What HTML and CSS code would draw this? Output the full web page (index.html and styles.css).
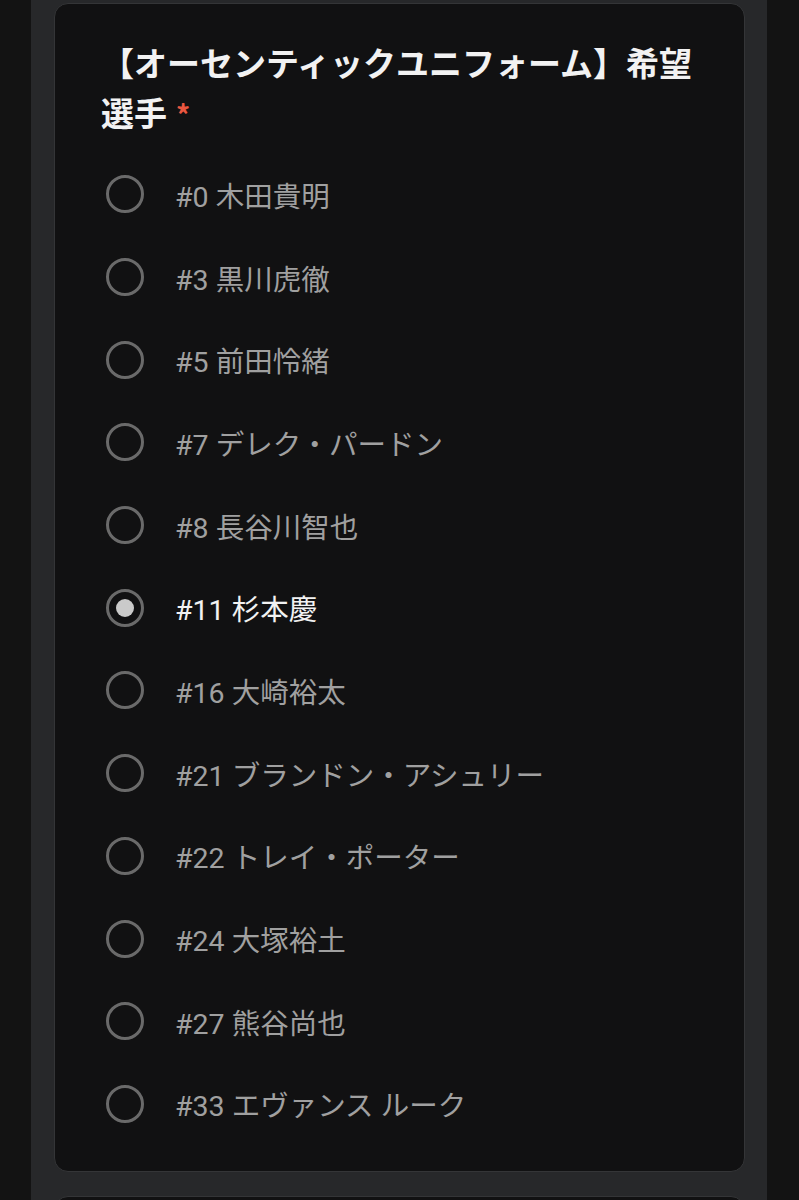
FILE: index.html
```html
<!DOCTYPE html>
<html lang="ja">
<head>
<meta charset="utf-8">
<title>オーセンティックユニフォーム</title>
<link rel="stylesheet" href="styles.css">
</head>
<body>
<div class="page">
  <div class="card">
    <div class="title">【オーセンティックユニフォーム】希望選手<span class="req">*</span></div>
    <ul class="options">
      <li class="option"><span class="radio"></span><span class="label">#0 木田貴明</span></li>
      <li class="option"><span class="radio"></span><span class="label">#3 黒川虎徹</span></li>
      <li class="option"><span class="radio"></span><span class="label">#5 前田怜緒</span></li>
      <li class="option"><span class="radio"></span><span class="label">#7 デレク・パードン</span></li>
      <li class="option"><span class="radio"></span><span class="label">#8 長谷川智也</span></li>
      <li class="option selected"><span class="radio"></span><span class="label">#11 杉本慶</span></li>
      <li class="option"><span class="radio"></span><span class="label">#16 大崎裕太</span></li>
      <li class="option"><span class="radio"></span><span class="label">#21 ブランドン・アシュリー</span></li>
      <li class="option"><span class="radio"></span><span class="label">#22 トレイ・ポーター</span></li>
      <li class="option"><span class="radio"></span><span class="label">#24 大塚裕土</span></li>
      <li class="option"><span class="radio"></span><span class="label">#27 熊谷尚也</span></li>
      <li class="option"><span class="radio"></span><span class="label">#33 エヴァンス ルーク</span></li>
    </ul>
  </div>
  <div class="card next"></div>
</div>
</body>
</html>
```
FILE: styles.css
```css
html, body {
  margin: 0;
  padding: 0;
  background: #131313;
  height: 1200px;
  overflow: hidden;
}
.page {
  margin: 0 32px 0 31px;
  padding: 3px 22px 0 23px;
  background: #27282a;
  height: 1200px;
  box-sizing: border-box;
  overflow: hidden;
}
.card {
  background: #111112;
  border: 1px solid #343537;
  border-radius: 14px;
  padding: 33px 45px 26px 46px;
}
.card.next {
  margin-top: 24px;
  height: 60px;
  padding: 0;
}
.title {
  font-family: "Noto Sans CJK JP", "Noto Sans", sans-serif;
  font-weight: 700;
  font-size: 33px;
  line-height: 50px;
  color: #f2f2f2;
}
.req {
  color: #ea5740;
  margin-left: 9px;
  font-size: 28px;
}
.options {
  list-style: none;
  margin: 14px 0 0 0;
  padding: 0;
}
.option {
  display: flex;
  align-items: center;
  height: 82.7px;
}
.radio {
  position: relative;
  box-sizing: border-box;
  width: 38px;
  height: 38px;
  margin-left: 5px;
  border: 3px solid #6a6a6a;
  border-radius: 50%;
  flex: none;
}
.selected .radio::after {
  content: "";
  position: absolute;
  left: 50%;
  top: 50%;
  width: 18px;
  height: 18px;
  margin: -9px 0 0 -9px;
  border-radius: 50%;
  background: #cacaca;
}
.label {
  margin-left: 31px;
  font-family: Roboto, "Noto Sans CJK JP", sans-serif;
  font-size: 28.5px;
  color: #a0a0a0;
}
.selected .label {
  color: #f2f2f2;
}
```
